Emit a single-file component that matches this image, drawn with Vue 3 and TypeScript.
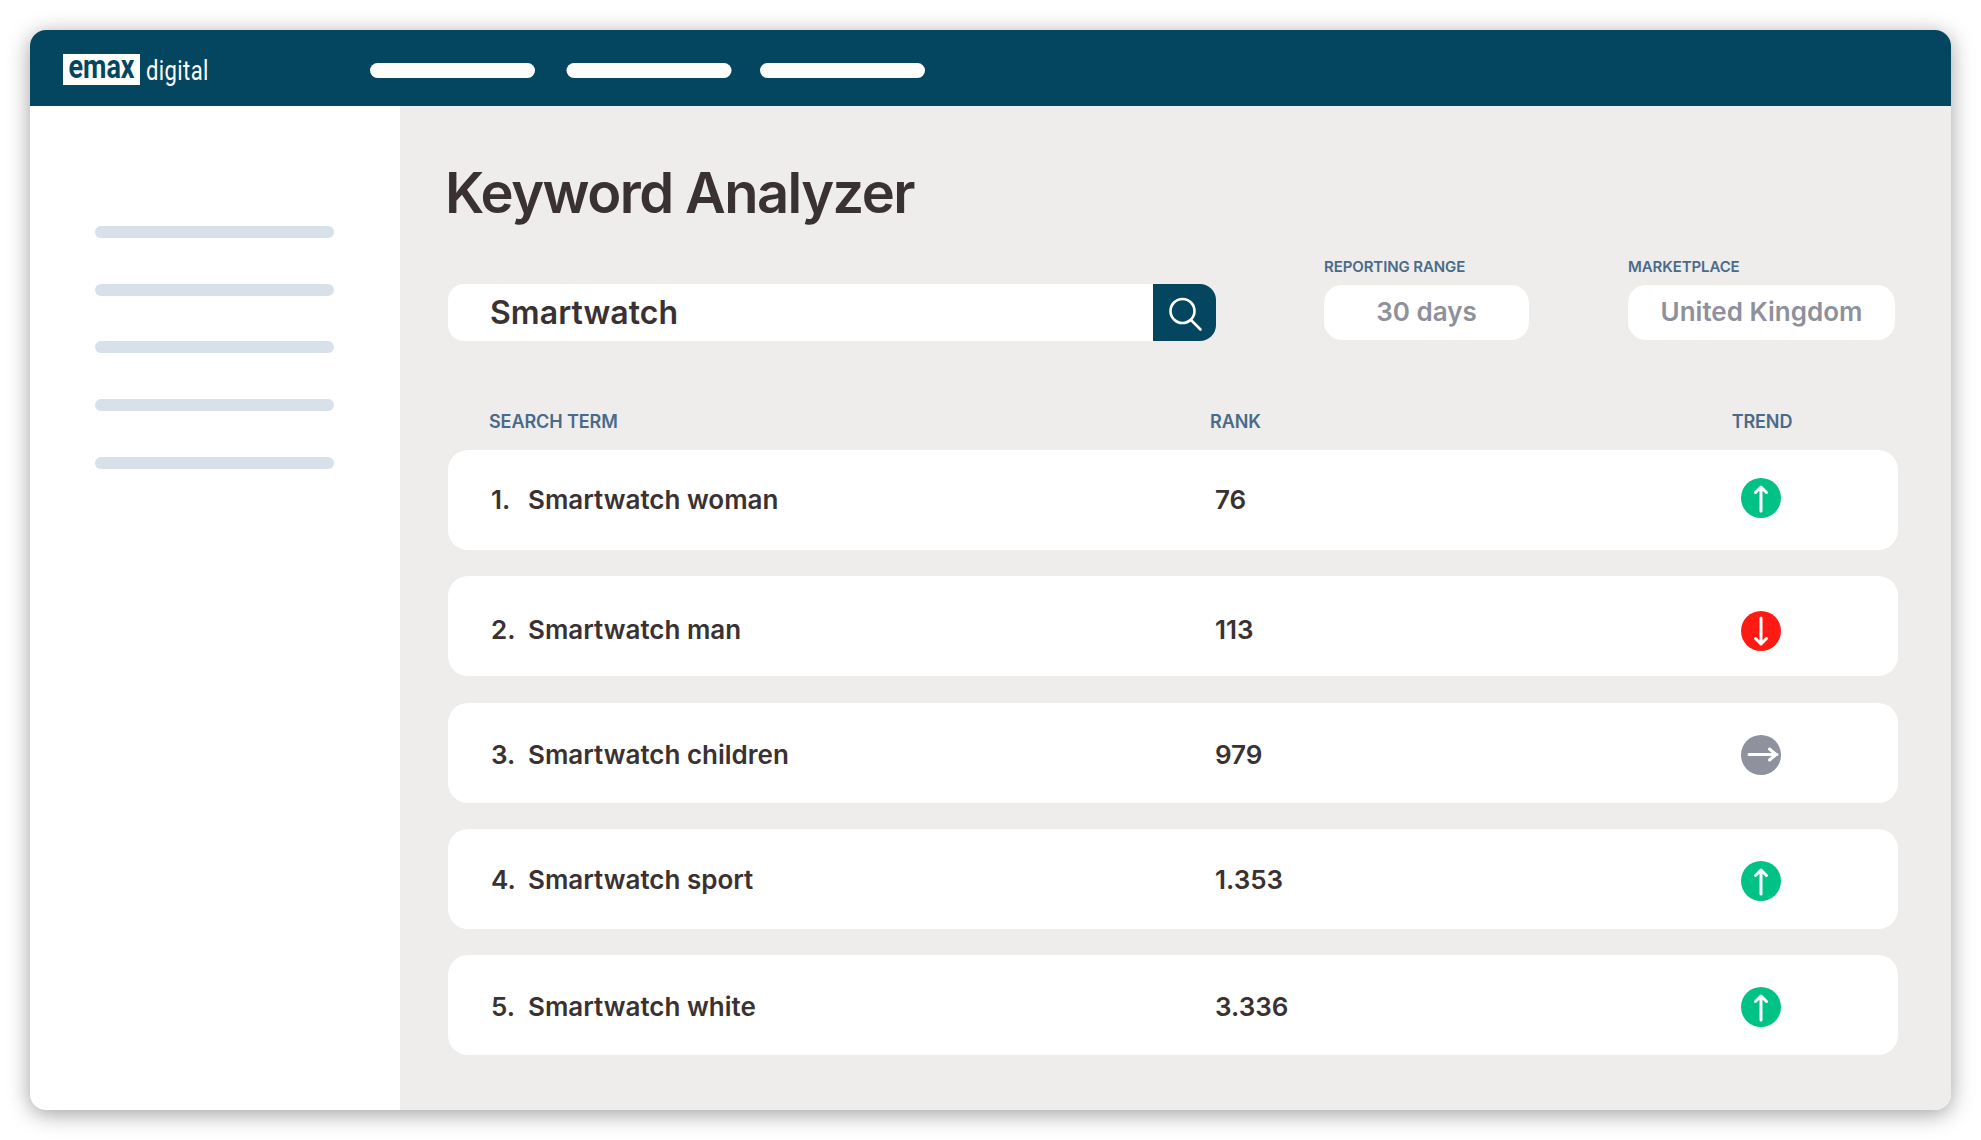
<script setup lang="ts">
type Trend = 'up' | 'down' | 'flat';

interface Keyword {
  term: string;
  rank: string;
  trend: Trend;
  shift: number;
  iconShift: number;
}

const navItems = [1, 2, 3];
const sideItems = [1, 2, 3, 4, 5];

// shift / iconShift: the rows in the design are not perfectly centred
const keywords: Keyword[] = [
  { term: 'Smartwatch woman', rank: '76', trend: 'up', shift: 0, iconShift: -2 },
  { term: 'Smartwatch man', rank: '113', trend: 'down', shift: 4, iconShift: 1 },
  { term: 'Smartwatch children', rank: '979', trend: 'flat', shift: 3, iconShift: -1 },
  { term: 'Smartwatch sport', rank: '1.353', trend: 'up', shift: 2, iconShift: 0 },
  { term: 'Smartwatch white', rank: '3.336', trend: 'up', shift: 2, iconShift: 0 },
];
</script>

<template>
  <div class="page">
    <div class="window">
      <header class="topbar">
        <div class="logo">
          <span class="logo-box"><span class="logo-emax">emax</span></span>
          <span class="logo-digital">digital</span>
        </div>
        <nav class="nav">
          <span v-for="n in navItems" :key="n" class="nav-bar"></span>
        </nav>
      </header>

      <div class="body">
        <aside class="sidebar">
          <span v-for="n in sideItems" :key="n" class="side-line"></span>
        </aside>

        <main class="content">
          <h1 class="title">Keyword Analyzer</h1>

          <div class="toolbar">
            <div class="search">
              <span class="search-text">Smartwatch</span>
              <button class="search-btn" type="button">
                <svg width="63" height="57" viewBox="0 0 63 57" fill="none" stroke="#fff" stroke-width="2.6" stroke-linecap="round">
                  <circle cx="29.5" cy="27" r="12" />
                  <path d="M38 36l9.5 9.5" />
                </svg>
              </button>
            </div>
            <div class="filter filter-range">
              <label class="filter-label">REPORTING RANGE</label>
              <div class="filter-value">30 days</div>
            </div>
            <div class="filter filter-market">
              <label class="filter-label">MARKETPLACE</label>
              <div class="filter-value">United Kingdom</div>
            </div>
          </div>

          <div class="table-head">
            <span>SEARCH TERM</span>
            <span>RANK</span>
            <span class="head-trend">TREND</span>
          </div>

          <div class="rows">
            <div
              v-for="(k, i) in keywords"
              :key="k.term"
              class="row"
              :style="{ paddingTop: k.shift * 2 + 'px' }"
            >
              <div class="term">
                <span class="num">{{ i + 1 }}.</span>
                <span>{{ k.term }}</span>
              </div>
              <div class="rank">{{ k.rank }}</div>
              <div class="trend" :style="{ transform: `translateY(${k.iconShift}px)` }">
                <svg v-if="k.trend === 'up'" width="40" height="40" viewBox="0 0 40 40" fill="none" stroke="#fff" stroke-width="3" stroke-linecap="round" stroke-linejoin="round">
                  <circle cx="20" cy="20" r="20" fill="#00c285" stroke="none" />
                  <path d="M20 9v24M14.5 14.5L20 9l5.5 5.5" />
                </svg>
                <svg v-else-if="k.trend === 'down'" width="40" height="40" viewBox="0 0 40 40" fill="none" stroke="#fff" stroke-width="3" stroke-linecap="round" stroke-linejoin="round">
                  <circle cx="20" cy="20" r="20" fill="#ff1a14" stroke="none" />
                  <path d="M20 7v26M14.5 27.5L20 33l5.5-5.5" />
                </svg>
                <svg v-else width="40" height="40" viewBox="0 0 40 40" fill="none" stroke="#fff" stroke-width="3" stroke-linecap="round" stroke-linejoin="round">
                  <circle cx="20" cy="20" r="20" fill="#8f919c" stroke="none" />
                  <path d="M8 19.5h28M28.5 14l6.5 5.5-6.5 5.5" />
                </svg>
              </div>
            </div>
          </div>
        </main>
      </div>
    </div>
  </div>
</template>

<style>
html,
body {
  margin: 0;
  background: #fff;
}
</style>

<style scoped>
.page {
  padding: 30px;
  box-sizing: border-box;
  width: 1981px;
  height: 1140px;
  font-family: Inter, "Noto Sans", sans-serif;
  color: #3a3133;
}

.window {
  width: 1921px;
  height: 1080px;
  border-radius: 16px;
  overflow: hidden;
  display: flex;
  flex-direction: column;
  background: #fff;
  box-shadow: 0 4px 22px rgba(0, 0, 0, 0.38);
}

.topbar {
  flex: none;
  height: 76px;
  background: #04465f;
  display: flex;
  align-items: center;
  padding-left: 33px;
}

.logo {
  width: 307px;
  display: flex;
  align-items: center;
  height: 31px;
  margin-top: 3px;
}

.logo-box {
  flex: none;
  width: 77px;
  height: 31px;
  background: #fff;
  display: flex;
  align-items: center;
  justify-content: center;
}

.logo-emax {
  font-family: Roboto, sans-serif;
  font-weight: 700;
  font-size: 27px;
  line-height: 31px;
  color: #04465f;
  transform: translateY(-2px) scaleY(1.26);
}

.logo-digital {
  font-family: Roboto, sans-serif;
  font-size: 22px;
  line-height: 31px;
  letter-spacing: 0.4px;
  color: #fff;
  margin-left: 6px;
  transform: translateY(1px) scaleY(1.25);
}

.nav {
  display: flex;
  gap: 30px;
  margin-top: 5px;
}

.nav-bar {
  width: 165px;
  height: 15px;
  border-radius: 8px;
  background: #fff;
}

.nav-bar:nth-child(2) {
  transform: translateX(1.5px);
}

.body {
  flex: 1;
  display: flex;
  min-height: 0;
}

.sidebar {
  flex: none;
  width: 370px;
  box-sizing: border-box;
  padding: 120px 0 0 65px;
  display: flex;
  flex-direction: column;
  gap: 45.7px;
}

.side-line {
  width: 239px;
  height: 12px;
  border-radius: 6px;
  background: #d8e0e9;
}

.content {
  flex: 1;
  background: #eeedeb;
  padding: 53px 0 0 48px;
  min-width: 0;
}

.title {
  margin: 0 0 0 -3px;
  font-size: 56px;
  font-weight: 600;
  line-height: 68px;
  letter-spacing: -1.55px;
}

.toolbar {
  display: flex;
  align-items: flex-end;
  height: 81px;
  margin-top: 33px;
}

.search {
  width: 768px;
  height: 57px;
  background: #fff;
  border-radius: 16px;
  display: flex;
  align-items: center;
  justify-content: space-between;
  overflow: hidden;
}

.search-text {
  padding-left: 42px;
  font-size: 32px;
  font-weight: 600;
  letter-spacing: 0.05px;
}

.search-btn {
  width: 63px;
  height: 57px;
  padding: 0;
  border: 0;
  background: #04465f;
  display: block;
}

.search-btn svg {
  display: block;
}

.filter {
  display: flex;
  flex-direction: column;
  margin-bottom: 1px;
}

.filter-range {
  margin-left: 108px;
  width: 205px;
}

.filter-market {
  margin-left: 99px;
  width: 267px;
}

.filter-label {
  font-size: 15px;
  font-weight: 600;
  line-height: 20px;
  letter-spacing: -0.1px;
  color: #4a6a8a;
  margin-bottom: 8px;
}

.filter-value {
  height: 55px;
  padding-bottom: 2px;
  box-sizing: border-box;
  border-radius: 18px;
  background: #fff;
  display: flex;
  align-items: center;
  justify-content: center;
  font-size: 26px;
  font-weight: 600;
  color: #8e909b;
}

.table-head {
  display: grid;
  grid-template-columns: 721px 1fr 80px;
  width: 1450px;
  box-sizing: border-box;
  padding: 0 96px 0 41px;
  margin-top: 70px;
  height: 39px;
  font-size: 18px;
  font-weight: 600;
  line-height: 22px;
  letter-spacing: -0.1px;
  color: #4a6a8a;
}

.head-trend {
  text-align: center;
}

.rows {
  display: flex;
  flex-direction: column;
  gap: 26.25px;
  width: 1450px;
}

.row {
  height: 100px;
  border-radius: 20px;
  background: #fff;
  display: grid;
  grid-template-columns: 724px 1fr 80px;
  align-items: center;
  padding: 0 97px 0 43px;
  box-sizing: border-box;
  font-size: 26px;
  font-weight: 600;
}

.term,
.rank {
  margin-top: -2px;
}

.term {
  display: flex;
}

.num {
  width: 37px;
  flex: none;
}

.trend {
  display: flex;
  justify-content: center;
}

.trend svg {
  display: block;
}
</style>
